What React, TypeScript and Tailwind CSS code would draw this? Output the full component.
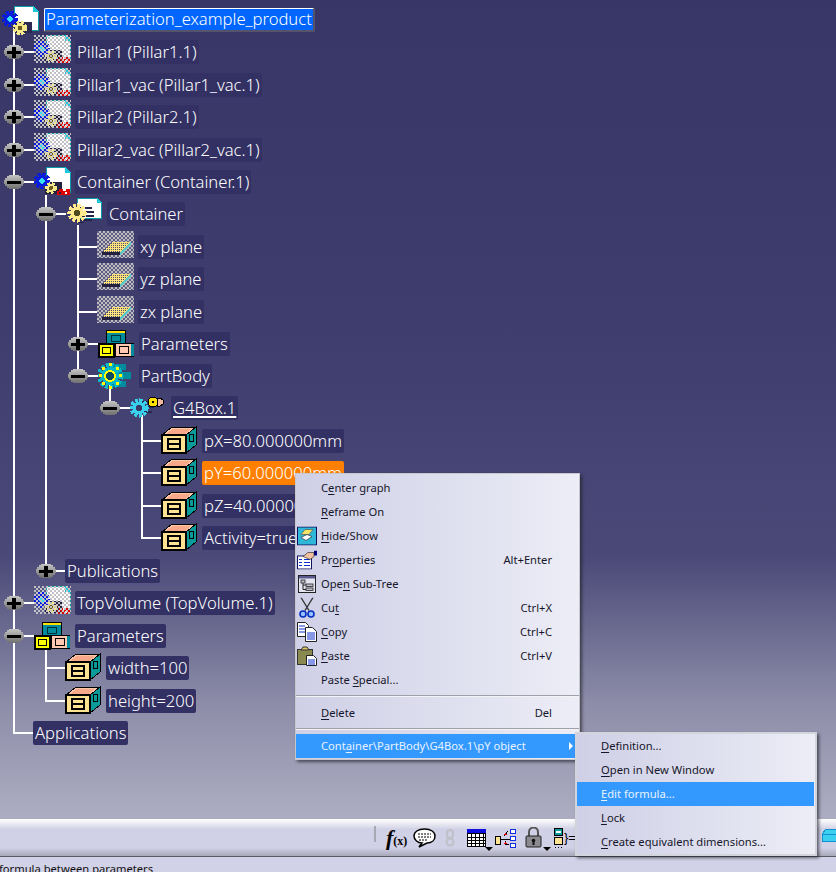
import type { ReactNode } from "react";

const indents = ["pl-[4px]", "pl-[36px]", "pl-[68px]", "pl-[100px]", "pl-[132px]"];

function Toggler({ open }: { open: boolean }) {
  return (
    <svg width="20" height="14" viewBox="0 0 20 14" className="shrink-0" shapeRendering="crispEdges">
      <defs>
        <linearGradient id="toggler-fill" x1="0" y1="0" x2="0" y2="1">
          <stop offset="0" stopColor="#c4c4c4" />
          <stop offset="0.5" stopColor="#9a9a9a" />
          <stop offset="1" stopColor="#6f6f6f" />
        </linearGradient>
      </defs>
      <path d="M5 0h10v1h2v2h2v2h1v4h-1v2h-2v2h-2v1H5v-1H3v-2H1V9H0V5h1V3h2V1h2z" fill="url(#toggler-fill)" />
      <rect x="3" y="6" width="14" height="3" fill="#000" />
      {!open && <rect x="8" y="2" width="4" height="11" fill="#000" />}
    </svg>
  );
}

function Gear({ cx, cy, r, fill, hole }: { cx: number; cy: number; r: number; fill: string; hole: string }) {
  return (
    <g>
      <circle cx={cx} cy={cy} r={r * 0.95} fill="none" stroke={fill} strokeWidth={r * 0.5} strokeDasharray="3 1.5" />
      <circle cx={cx} cy={cy} r={r * 0.8} fill={fill} />
      <circle cx={cx} cy={cy} r={r * 0.4} fill={hole} />
    </g>
  );
}

function ProductIcon({ ghost }: { ghost?: boolean }) {
  return (
    <svg width="37" height="30" viewBox="0 0 37 30" className="shrink-0" shapeRendering="crispEdges">
      <defs>
        <pattern id="chk-ghost" width="4" height="4" patternUnits="userSpaceOnUse">
          <rect width="2" height="2" fill="#c2c2c6" />
          <rect x="2" y="2" width="2" height="2" fill="#c2c2c6" />
        </pattern>
      </defs>
      <path d="M12.5 0.5h19l5 5v20h-24z" fill="#fff" stroke="#0b9aa6" />
      <path d="M31 0l6 6h-6z" fill="#1cc8d8" />
      <rect x="11" y="15" width="17" height="12" fill="#23213f" />
      <Gear cx={8} cy={14} r={7} fill="#0a1be0" hole="#36e0f0" />
      <Gear cx={17} cy={21} r={5} fill="#f5e88a" hole="#6a5a20" />
      <path d="M23 24h2v-2h4v2h3v-2h4v6H23z" fill="#e00000" />
      <rect x="25" y="25" width="2" height="2" fill="#23213f" />
      <rect x="31" y="25" width="2" height="2" fill="#fff" />
      {ghost && <rect x="0" y="0" width="37" height="28" fill="url(#chk-ghost)" />}
    </svg>
  );
}

function RootIcon() {
  return (
    <svg width="38" height="30" viewBox="0 0 38 30" className="shrink-0" shapeRendering="crispEdges">
      <path d="M12.5 1.5h19l5 5v19h-24z" fill="#fff" stroke="#0b9aa6" />
      <path d="M31 1l6 6h-6z" fill="#1cc8d8" />
      <rect x="12" y="17" width="18" height="11" fill="#2b2950" />
      <Gear cx={8} cy={14} r={7} fill="#0a1be0" hole="#36e0f0" />
      <Gear cx={18} cy={23} r={6} fill="#f5e88a" hole="#6a5a20" />
    </svg>
  );
}

function PartIcon() {
  return (
    <svg width="37" height="32" viewBox="0 0 37 32" className="shrink-0" shapeRendering="crispEdges">
      <path d="M11.5 0.5h20l4 4v16h-24z" fill="#fff" stroke="#0b9aa6" />
      <path d="M31 0l5 5h-5z" fill="#1cc8d8" />
      <g fill="#25234a">
        <rect x="12" y="9" width="14" height="2" />
        <rect x="12" y="13" width="16" height="2" />
        <rect x="12" y="17" width="16" height="2" />
        <rect x="10" y="21" width="16" height="2" />
        <rect x="10" y="24" width="8" height="1" />
      </g>
      <Gear cx={11} cy={15} r={8} fill="#ffe98a" hole="#4d4a20" />
    </svg>
  );
}

function PlaneIcon() {
  return (
    <svg width="37" height="28" viewBox="0 0 37 28" className="-mt-[4px] shrink-0" shapeRendering="crispEdges">
      <defs>
        <pattern id="chk-plane" width="4" height="4" patternUnits="userSpaceOnUse">
          <rect width="4" height="4" fill="#bdbdbd" />
          <rect width="2" height="2" fill="#605e85" />
          <rect x="2" y="2" width="2" height="2" fill="#605e85" />
        </pattern>
        <pattern id="chk-yellow" width="2" height="2" patternUnits="userSpaceOnUse">
          <rect width="2" height="2" fill="#ffe27a" />
          <rect width="1" height="1" fill="#514f6e" />
        </pattern>
      </defs>
      <rect width="37" height="27" fill="url(#chk-plane)" />
      <path d="M5 21l11-10h18L23 21z" fill="url(#chk-yellow)" />
      <rect x="5" y="21" width="18" height="3" fill="#23213f" />
      <path d="M23 21l11-10v2L23 24z" fill="#57c8c8" />
    </svg>
  );
}

function ParamsIcon() {
  return (
    <svg width="37" height="28" viewBox="0 0 37 28" className="shrink-0" shapeRendering="crispEdges">
      <rect x="8.5" y="0.5" width="19" height="15" fill="#ffe000" stroke="#000" />
      <rect x="9" y="3" width="18" height="12" fill="#008c9c" />
      <rect x="13.5" y="5.5" width="9" height="6" fill="none" stroke="#00303a" />
      <rect x="17.5" y="13.5" width="18" height="13" fill="#ffc8b0" stroke="#000" />
      <rect x="33" y="14" width="3" height="12" fill="#008c9c" />
      <rect x="21.5" y="16.5" width="9" height="7" fill="none" stroke="#000" />
      <rect x="1" y="14" width="15" height="13" fill="#ffff00" stroke="#000" strokeWidth="2" />
      <rect x="4.5" y="17.5" width="8" height="6" fill="none" stroke="#000" />
    </svg>
  );
}

function BodyIcon() {
  return (
    <svg width="33" height="30" viewBox="0 0 33 30" className="shrink-0" shapeRendering="crispEdges">
      <g fill="#008c9c">
        <rect x="14" y="3" width="14" height="6" />
        <rect x="16" y="11" width="17" height="7" />
        <rect x="14" y="20" width="14" height="6" />
      </g>
      <Gear cx={12} cy={15} r={11} fill="#00b8c8" hole="#0a4a60" />
      <circle cx="12" cy="15" r="5" fill="none" stroke="#ffff00" strokeWidth="2" />
      <g fill="#ffff00">
        <rect x="11" y="2" width="3" height="3" />
        <rect x="4" y="6" width="3" height="3" />
        <rect x="18" y="6" width="3" height="3" />
        <rect x="1" y="13" width="3" height="3" />
        <rect x="21" y="13" width="3" height="3" />
        <rect x="4" y="21" width="3" height="3" />
        <rect x="18" y="21" width="3" height="3" />
        <rect x="11" y="25" width="3" height="3" />
      </g>
    </svg>
  );
}

function FeatureIcon() {
  return (
    <svg width="34" height="24" viewBox="0 0 34 24" className="shrink-0" shapeRendering="crispEdges">
      <rect x="12" y="5" width="12" height="2" fill="#29274e" />
      <rect x="14" y="10" width="10" height="2" fill="#29274e" />
      <rect x="14" y="15" width="8" height="2" fill="#29274e" />
      <Gear cx={9} cy={12} r={8} fill="#38d0ea" hole="#3a3868" />
      <circle cx="23" cy="6" r="5" fill="#ffe000" stroke="#000" />
      <circle cx="23" cy="6" r="1.5" fill="#000" />
      <path d="M27 2h3l3 2v4l-3 2h-3z" fill="#f2b8a0" stroke="#000" />
    </svg>
  );
}

function BoxIcon() {
  return (
    <svg width="36" height="28" viewBox="0 0 36 28" className="-mt-[2px] shrink-0" shapeRendering="crispEdges">
      <path d="M1 9L11 1h24L25 9z" fill="#ffc8a8" stroke="#000" />
      <path d="M5 8l7-5h18l-6 5z" fill="#f7a98a" />
      <path d="M25 9l10-8v18l-10 8z" fill="#0a9a9a" stroke="#000" />
      <rect x="28.5" y="8.5" width="4" height="7" fill="none" stroke="#000" />
      <rect x="1" y="9" width="24" height="18" fill="#ffe393" stroke="#000" strokeWidth="2" />
      <rect x="6" y="12" width="14" height="12" fill="#000" />
      <rect x="8" y="14" width="10" height="3" fill="#ffe393" />
      <rect x="8" y="19" width="10" height="3" fill="#ffe393" />
    </svg>
  );
}

function Label({ children, tone = "plain" }: { children: ReactNode; tone?: "plain" | "selected" | "edit" }) {
  const tones = {
    plain: "px-[2px] bg-[#333164]",
    selected: "px-[2px] bg-[#ff8000]",
    edit: "px-[1px] bg-[#0066ff] border-t border-l border-white border-r-2 border-b-2 border-r-[#55546a] border-b-[#55546a]",
  };
  return (
    <span
      className={`flex h-[24px] items-center whitespace-nowrap rounded-[2px] font-['Noto_Sans',sans-serif] text-[16.6px] font-light text-white ${tones[tone]}`}
    >
      {children}
    </span>
  );
}

type RowProps = {
  depth?: number;
  toggle?: "open" | "closed";
  icon?: ReactNode;
  children: ReactNode;
  tone?: "plain" | "selected" | "edit";
  tall?: boolean;
};

// rows sit on a 32.4px pitch in the picture, so some get one extra pixel
function TreeRow({ depth = 0, toggle, icon, children, tone, tall }: RowProps) {
  return (
    <div className={`relative flex h-[32px] items-center ${indents[depth]} ${tall ? "mb-[1px]" : ""}`}>
      {toggle ? (
        <>
          <Toggler open={toggle === "open"} />
          <span className={`h-[2px] bg-white ${icon ? "w-[10px]" : "w-[9px]"}`} />
        </>
      ) : (
        <span className="ml-[9px] h-[2px] w-[20px] bg-white" />
      )}
      {icon && <span className="flex w-[41px] shrink-0 items-center">{icon}</span>}
      <Label tone={tone}>{children}</Label>
    </div>
  );
}

type MenuEntry = {
  pre: string;
  key_: string;
  post: string;
  shortcut?: string;
  icon?: ReactNode;
  active?: boolean;
  arrow?: boolean;
};

function HideIcon() {
  return (
    <svg width="20" height="19" viewBox="0 0 20 19">
      <rect x="0.5" y="0.5" width="19" height="18" fill="#2fb7d8" stroke="#101060" />
      <path d="M8 3h8l-4 5H4z" fill="#f7e36a" stroke="#555" strokeWidth="0.7" />
      <path d="M4 11l6-3 5 2-6 4z" fill="#fff" stroke="#333" strokeWidth="0.7" />
    </svg>
  );
}

function PropsIcon() {
  return (
    <svg width="20" height="19" viewBox="0 0 20 19">
      <rect x="0.5" y="5.5" width="14" height="13" fill="#fff" stroke="#101060" />
      <path d="M2 9h3M7 9h6M2 12h3M7 12h6M2 15h3M7 15h6" stroke="#1030d0" strokeWidth="1.2" />
      <path d="M6 6l5-4h6v4l-4 3z" fill="#f2c0a0" stroke="#333" strokeWidth="0.7" />
      <rect x="17" y="0" width="3" height="5" fill="#000080" />
    </svg>
  );
}

function SubTreeIcon() {
  return (
    <svg width="18" height="18" viewBox="0 0 18 18">
      <rect x="0.5" y="0.5" width="17" height="17" fill="#e4e4f0" stroke="#222" />
      <rect x="1" y="1" width="16" height="2.5" fill="#5a5a90" />
      <rect x="3" y="5" width="4" height="3" fill="#c0c0d0" stroke="#222" strokeWidth="0.8" />
      <rect x="8" y="9" width="7" height="2.5" fill="#c0c0d0" stroke="#222" strokeWidth="0.8" />
      <rect x="8" y="13" width="7" height="2.5" fill="#c0c0d0" stroke="#222" strokeWidth="0.8" />
      <path d="M5 8v6.5h3M5 10h3" fill="none" stroke="#222" />
    </svg>
  );
}

function ScissorsIcon() {
  return (
    <svg width="16" height="21" viewBox="0 0 16 21">
      <path d="M2 0l8 13M14 0L6 13" stroke="#333" strokeWidth="1.4" fill="none" />
      <circle cx="4" cy="16.5" r="3" fill="#9cc0ff" stroke="#0030c0" strokeWidth="1.6" />
      <circle cx="12" cy="16.5" r="3" fill="#9cc0ff" stroke="#0030c0" strokeWidth="1.6" />
    </svg>
  );
}

function CopyIcon() {
  return (
    <svg width="20" height="20" viewBox="0 0 20 20">
      <path d="M0.5 0.5h8l3 3v11h-11z" fill="#fff" stroke="#222" />
      <path d="M2 4h6M2 7h6M2 10h6" stroke="#1030d0" />
      <path d="M8.5 5.5h7l4 4v10h-11z" fill="#fff" stroke="#222" />
      <path d="M10 11h8M10 13h8M10 15h8M10 17h8" stroke="#1030d0" />
    </svg>
  );
}

function PasteIcon() {
  return (
    <svg width="20" height="20" viewBox="0 0 20 20">
      <rect x="0.5" y="3.5" width="15" height="15" fill="#8a8a50" stroke="#333" />
      <path d="M4 4l2-3h4l2 3z" fill="#e0c860" stroke="#333" />
      <path d="M9.5 9.5h7l3 3v7h-10z" fill="#fff" stroke="#222" />
      <path d="M11 14h7M11 16h7M11 18h7" stroke="#1030d0" />
    </svg>
  );
}

const mainMenu: (MenuEntry | "sep")[] = [
  { pre: "C", key_: "e", post: "nter graph" },
  { pre: "", key_: "R", post: "eframe On" },
  { pre: "", key_: "H", post: "ide/Show", icon: <HideIcon /> },
  { pre: "Pr", key_: "o", post: "perties", shortcut: "Alt+Enter", icon: <PropsIcon /> },
  { pre: "Ope", key_: "n", post: " Sub-Tree", icon: <SubTreeIcon /> },
  { pre: "Cu", key_: "t", post: "", shortcut: "Ctrl+X", icon: <ScissorsIcon /> },
  { pre: "", key_: "C", post: "opy", shortcut: "Ctrl+C", icon: <CopyIcon /> },
  { pre: "", key_: "P", post: "aste", shortcut: "Ctrl+V", icon: <PasteIcon /> },
  { pre: "Paste ", key_: "S", post: "pecial..." },
  "sep",
  { pre: "", key_: "D", post: "elete", shortcut: "Del" },
  "sep",
  { pre: "Cont", key_: "a", post: "iner\\PartBody\\G4Box.1\\pY object", active: true, arrow: true },
];

const subMenu: MenuEntry[] = [
  { pre: "", key_: "D", post: "efinition..." },
  { pre: "", key_: "O", post: "pen in New Window" },
  { pre: "", key_: "E", post: "dit formula...", active: true },
  { pre: "", key_: "L", post: "ock" },
  { pre: "", key_: "C", post: "reate equivalent dimensions..." },
];

function MenuItem({ item, sub }: { item: MenuEntry; sub?: boolean }) {
  return (
    <div
      className={`relative flex h-[24px] items-center pr-[27px] ${sub ? "pl-[24px]" : "pl-[25px]"} ${
        item.active ? "bg-[#3399ff] text-[#e8f2ff]" : "text-[#16162a]"
      }`}
    >
      {item.icon && <span className="absolute left-[0px] top-1/2 flex w-[22px] -translate-y-1/2 justify-center">{item.icon}</span>}
      <span className="whitespace-pre">
        {item.pre}
        <u className="underline-offset-2">{item.key_}</u>
        {item.post}
      </span>
      {item.shortcut && <span className="ml-auto">{item.shortcut}</span>}
      {item.arrow && <span className="absolute right-[6px] h-0 w-0 border-y-[4px] border-l-[4px] border-y-transparent border-l-white" />}
    </div>
  );
}

function ContextMenus() {
  return (
    <>
      <div className="absolute left-[295px] top-[473px] w-[285px] border border-[#c8c8cc] bg-gradient-to-r from-[#cfcfe6] to-[#ecedf6] pb-[1px] pt-[2px] font-['Noto_Sans',sans-serif] text-[11.2px] shadow-[2px_2px_3px_rgba(30,30,40,0.65)]">
        {mainMenu.map((item, i) =>
          item === "sep" ? (
            <div key={i} className="mb-[4px] mt-[3px] h-[2px] border-b border-[#f4f4f8] bg-[#a0a0a8]" />
          ) : (
            <MenuItem key={i} item={item} />
          ),
        )}
      </div>
      <div className="absolute left-[575px] top-[732px] w-[242px] border-2 border-[#d4d4dc] bg-gradient-to-r from-[#cfcfe6] to-[#ecedf6] pr-[1px] font-['Noto_Sans',sans-serif] text-[11.2px] shadow-[2px_2px_3px_rgba(30,30,40,0.65)]">
        {subMenu.map((item) => (
          <MenuItem key={item.post} item={item} sub />
        ))}
      </div>
    </>
  );
}

function Toolbar() {
  return (
    <div className="flex h-[38px] items-center border-b border-[#5a5a66] bg-[linear-gradient(180deg,#ffffff_0%,#e8e8f2_14%,#d0d0e6_28%,#d0d0e6_78%,#a8a8b8_100%)] pl-[374px]">
      <span className="mb-[8px] h-[16px] w-[2px] bg-[#a8a8b4]" />
      <span className="ml-[10px] flex w-[22px] items-baseline font-['Liberation_Serif',serif] font-bold leading-none text-black">
        <span className="text-[22px] italic">f</span>
        <span className="text-[12px]">(x)</span>
      </span>
      <svg width="23" height="20" viewBox="0 0 23 20" className="ml-[5px]">
        <path d="M11.5 1C5 1 1 4 1 8s4 7 8 7l-3 4 8-4c5 0 8-3 8-7s-4-7-10.5-7z" fill="#fff" stroke="#000" strokeWidth="1.5" />
        <path d="M5 6h13M5 9h13M6 12h9" stroke="#000" strokeDasharray="2 1" />
      </svg>
      <svg width="12" height="18" viewBox="0 0 12 18" className="ml-[8px]">
        <rect x="3" y="1" width="6" height="8" rx="3" fill="none" stroke="#c0c0c8" strokeWidth="2" />
        <circle cx="6" cy="13" r="3.5" fill="none" stroke="#c0c0c8" strokeWidth="2" />
      </svg>
      <svg width="19" height="18" viewBox="0 0 19 18" className="ml-[11px]" shapeRendering="crispEdges">
        <rect x="0" y="0" width="19" height="4" fill="#1010e0" />
        <rect x="0.5" y="4.5" width="18" height="13" fill="#fff" stroke="#000" />
        <path d="M4 4v14M8 4v14M12 4v14M16 4v14M0 8h19M0 11h19M0 14h19" stroke="#000" />
      </svg>
      <span className="ml-[-1px] mt-[22px] h-0 w-0 border-x-[4px] border-t-[4px] border-x-transparent border-t-black" />
      <svg width="21" height="20" viewBox="0 0 21 20" className="ml-[2px]" shapeRendering="crispEdges">
        <rect x="0.5" y="8.5" width="5" height="8" fill="#ffe393" stroke="#000" />
        <rect x="15.5" y="1.5" width="5" height="4" fill="#fff" stroke="#1030e0" />
        <rect x="15.5" y="8.5" width="5" height="4" fill="#fff" stroke="#1030e0" />
        <rect x="15.5" y="15.5" width="5" height="4" fill="#fff" stroke="#1030e0" />
        <path d="M6 11h9M9 8l4-5M10 13v3h4" fill="none" stroke="#000" />
        <path d="M9 6h3M10 5v2M9 15h3M10 14v2" stroke="#e00000" />
      </svg>
      <svg width="17" height="21" viewBox="0 0 17 21" className="ml-[9px]">
        <path d="M4 9V5a4.5 4.5 0 0 1 9 0v4" fill="none" stroke="#555" strokeWidth="2" />
        <rect x="1" y="9" width="15" height="11" rx="1" fill="#8a8a90" stroke="#222" />
        <circle cx="8.5" cy="13.5" r="1.8" fill="#111" />
        <rect x="7.5" y="14" width="2" height="4" fill="#111" />
      </svg>
      <span className="ml-[1px] mt-[22px] h-0 w-0 border-x-[4px] border-t-[4px] border-x-transparent border-t-black" />
      <svg width="11" height="20" viewBox="0 0 11 20" className="ml-[2px]" shapeRendering="crispEdges">
        <rect x="1.5" y="0.5" width="8" height="7" fill="#0a9a9a" stroke="#000" />
        <rect x="1.5" y="9.5" width="8" height="7" fill="#ffe393" stroke="#000" />
        <rect x="3" y="3" width="5" height="2" fill="#fff" />
        <path d="M2 19h1M5 19h1M8 19h1" stroke="#000" />
      </svg>
      <span className="font-['Liberation_Sans',sans-serif] text-[13px] leading-none text-black">{"}="}</span>
      <svg width="14" height="17" viewBox="0 0 14 17" className="ml-auto" shapeRendering="crispEdges">
        <path d="M0 5l4-5h10v12H0z" fill="#3cd0f0" stroke="#1090d0" />
        <path d="M0 5h14" stroke="#1090d0" />
      </svg>
    </div>
  );
}

export default function App() {
  const ghost = (
    <span className="-mt-[4px] flex">
      <ProductIcon ghost />
    </span>
  );
  return (
    <div className="relative flex h-[872px] w-[836px] flex-col overflow-hidden">
      <div className="relative flex-1 bg-[linear-gradient(180deg,#383666_0%,#3f3d6d_40%,#4a4978_68%,#8d8da9_86%,#adadc2_100%)] pt-[4px]">
        {/* tree trunks, under the rows */}
        <div className="absolute left-[13px] top-[28px] h-[704px] w-[2px] bg-white" />
        <div className="absolute left-[45px] top-[195px] h-[376px] w-[2px] bg-white" />
        <div className="absolute left-[77px] top-[225px] h-[151px] w-[2px] bg-white" />
        <div className="absolute left-[109px] top-[385px] h-[24px] w-[2px] bg-white" />
        <div className="absolute left-[141px] top-[415px] h-[124px] w-[2px] bg-white" />
        <div className="absolute left-[45px] top-[645px] h-[56px] w-[2px] bg-white" />

        <div className="relative flex h-[32px] items-center pl-[2px]">
          <span className="flex w-[42px] items-center">
            <RootIcon />
          </span>
          <Label tone="edit">Parameterization_example_product</Label>
        </div>
        <TreeRow tall toggle="closed" icon={ghost}>Pillar1 (Pillar1.1)</TreeRow>
        <TreeRow toggle="closed" icon={ghost}>Pillar1_vac (Pillar1_vac.1)</TreeRow>
        <TreeRow tall toggle="closed" icon={ghost}>Pillar2 (Pillar2.1)</TreeRow>
        <TreeRow toggle="closed" icon={ghost}>Pillar2_vac (Pillar2_vac.1)</TreeRow>
        <TreeRow toggle="open" icon={<ProductIcon />}>Container (Container.1)</TreeRow>
        <TreeRow tall depth={1} toggle="open" icon={<PartIcon />}>Container</TreeRow>
        <TreeRow depth={2} icon={<PlaneIcon />}>xy plane</TreeRow>
        <TreeRow tall depth={2} icon={<PlaneIcon />}>yz plane</TreeRow>
        <TreeRow depth={2} icon={<PlaneIcon />}>zx plane</TreeRow>
        <TreeRow depth={2} toggle="closed" icon={<ParamsIcon />}>Parameters</TreeRow>
        <TreeRow depth={2} toggle="open" icon={<BodyIcon />}>PartBody</TreeRow>
        <TreeRow tall depth={3} toggle="open" icon={<FeatureIcon />}>
          <span className="underline decoration-2 underline-offset-2">G4Box.1</span>
        </TreeRow>
        <TreeRow depth={4} icon={<BoxIcon />}>pX=80.000000mm</TreeRow>
        <TreeRow tall depth={4} icon={<BoxIcon />} tone="selected">pY=60.000000mm</TreeRow>
        <TreeRow depth={4} icon={<BoxIcon />}>pZ=40.000000mm</TreeRow>
        <TreeRow tall depth={4} icon={<BoxIcon />}>Activity=true</TreeRow>
        <TreeRow depth={1} toggle="closed">Publications</TreeRow>
        <TreeRow tall toggle="closed" icon={ghost}>TopVolume (TopVolume.1)</TreeRow>
        <TreeRow toggle="open" icon={<ParamsIcon />}>Parameters</TreeRow>
        <TreeRow tall depth={1} icon={<BoxIcon />}>width=100</TreeRow>
        <TreeRow depth={1} icon={<BoxIcon />}>height=200</TreeRow>
        <TreeRow>Applications</TreeRow>
      </div>
      <Toolbar />
      <div className="h-[15px] overflow-hidden whitespace-nowrap bg-[#d1d1e7] pt-[3px] font-['Noto_Sans',sans-serif] text-[11.2px] leading-[18px] text-[#111] [text-indent:-1px]">
        formula between parameters
      </div>
      <ContextMenus />
    </div>
  );
}
